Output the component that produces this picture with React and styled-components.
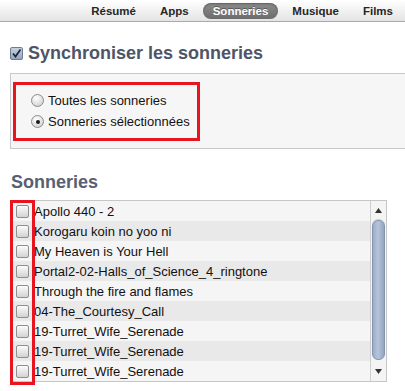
import React from 'react'
import styled, { createGlobalStyle } from 'styled-components'

const GlobalStyle = createGlobalStyle`
  html, body {
    margin: 0;
    padding: 0;
    background: #ffffff;
    font-family: "Liberation Sans", Arial, sans-serif;
  }
`

const tabs = ['Résumé', 'Apps', 'Sonneries', 'Musique', 'Films']

const ringtones = [
  'Apollo 440 - 2',
  'Korogaru koin no yoo ni',
  'My Heaven is Your Hell',
  'Portal2-02-Halls_of_Science_4_ringtone',
  'Through the fire and flames',
  '04-The_Courtesy_Call',
  '19-Turret_Wife_Serenade',
  '19-Turret_Wife_Serenade',
  '19-Turret_Wife_Serenade',
]

const Page = styled.div`
  width: 405px;
  height: 391px;
  overflow: hidden;
`

const TabBar = styled.div`
  height: 21px;
  display: flex;
  align-items: center;
  justify-content: flex-end;
  gap: 4px;
  padding-right: 2px;
  background: linear-gradient(#ffffff, #e4e4e4);
  border-bottom: 1px solid #a9a9a9;
`

const Tab = styled.div`
  height: 16px;
  line-height: 16px;
  padding: 0 10px;
  border-radius: 8px;
  font-size: 11.5px;
  font-weight: bold;
  color: ${p => (p.$active ? '#ffffff' : '#262626')};
  background: ${p => (p.$active ? 'linear-gradient(#8c8c8c, #6c6c6c)' : 'transparent')};
  box-shadow: ${p => (p.$active ? 'inset 0 1px 2px rgba(0,0,0,0.35)' : 'none')};
  text-shadow: ${p => (p.$active ? '0 -1px 0 rgba(0,0,0,0.35)' : 'none')};
`

const Content = styled.div`
  padding-left: 10px;
`

const SyncTitle = styled.h1`
  margin: 20px 0 0;
  display: flex;
  align-items: center;
  gap: 5px;
  font-size: 18px;
  line-height: 22px;
  font-weight: bold;
  color: #4e5566;
`

const OptionsBox = styled.div`
  margin-top: 9px;
  height: 76px;
  padding: 8px 0 0 2px;
  box-sizing: border-box;
  background: #f6f6f6;
  border: 1px solid #c9c9c9;
  border-right: none;
`

const Highlight = styled.div`
  width: fit-content;
  padding: 5px 7px 6px 15px;
  border: 3px solid #e8141f;
`

const RadioRow = styled.label`
  height: 21px;
  display: flex;
  align-items: center;
  gap: 4px;
  font-size: 13px;
  color: #111;
`

const Radio = styled.span`
  width: 11px;
  height: 11px;
  border-radius: 50%;
  border: 1px solid #8c8c8c;
  background: radial-gradient(circle at 40% 30%, #ffffff, #d4d4d4 80%);
  display: flex;
  align-items: center;
  justify-content: center;
  &::after {
    content: '';
    width: 4px;
    height: 4px;
    border-radius: 50%;
    background: ${p => (p.$checked ? '#1a1a1a' : 'transparent')};
  }
`

const SectionTitle = styled.h2`
  margin: 22px 0 0 1px;
  font-size: 18px;
  line-height: 22px;
  font-weight: bold;
  color: #586071;
`

const ListFrame = styled.div`
  position: relative;
  margin-top: 7px;
  width: 377px;
  display: flex;
  border: 1px solid #c6c6c6;
  box-sizing: border-box;
`

const Rows = styled.div`
  flex: 1;
`

const Row = styled.div`
  height: 20px;
  display: flex;
  align-items: center;
  gap: 5px;
  padding-left: 5px;
  font-size: 13px;
  color: #111;
  background: ${p => (p.$odd ? '#e9e9e9' : '#f5f5f5')};
  white-space: nowrap;
`

const Box = styled.span`
  width: 11px;
  height: 11px;
  flex: none;
  border: 1px solid #8f8f8f;
  border-radius: 2px;
  background: linear-gradient(#fcfcfc, #d2d2d2);
`

const ScrollBar = styled.div`
  width: 15px;
  border-left: 1px solid #cfcfcf;
  background: #f4f4f4;
  display: flex;
  flex-direction: column;
  align-items: center;
`

const Arrow = styled.div`
  height: 19px;
  display: flex;
  align-items: center;
  justify-content: center;
`

const Thumb = styled.div`
  flex: 1;
  width: 11px;
  margin: 0 0 2px;
  border-radius: 6px;
  border: 1px solid #8494b0;
  background: linear-gradient(90deg, #9badc8, #b7c4da 45%, #92a4c1);
  box-shadow: 0 -1px 0 #d0d0d0;
`

const ColumnMark = styled.div`
  position: absolute;
  left: -1px;
  top: -1px;
  bottom: -4px;
  width: 19px;
  border: 3px solid #e8141f;
`

const TitleCheck = () => (
  <svg width="13" height="13" viewBox="0 0 13 13">
    <defs>
      <linearGradient id="tc" x1="0" y1="0" x2="0" y2="1">
        <stop offset="0" stopColor="#c8d3e3" />
        <stop offset="1" stopColor="#93a3bd" />
      </linearGradient>
    </defs>
    <rect x="0.5" y="0.5" width="12" height="12" rx="1.5" fill="url(#tc)" stroke="#6f7c92" />
    <path d="M3 6.5 L5.5 9.5 L10.5 2.5" fill="none" stroke="#1e2430" strokeWidth="1.7" />
  </svg>
)

const Triangle = ({ down }) => (
  <svg width="7" height="5" viewBox="0 0 7 5">
    <path d={down ? 'M0 0 H7 L3.5 5 Z' : 'M0 5 H7 L3.5 0 Z'} fill="#333" />
  </svg>
)

export default function App() {
  return (
    <Page>
      <GlobalStyle />
      <TabBar>
        {tabs.map(t => (
          <Tab key={t} $active={t === 'Sonneries'}>{t}</Tab>
        ))}
      </TabBar>
      <Content>
        <SyncTitle>
          <TitleCheck />
          Synchroniser les sonneries
        </SyncTitle>
        <OptionsBox>
          <Highlight>
            <RadioRow><Radio />Toutes les sonneries</RadioRow>
            <RadioRow><Radio $checked />Sonneries sélectionnées</RadioRow>
          </Highlight>
        </OptionsBox>
        <SectionTitle>Sonneries</SectionTitle>
        <ListFrame>
          <Rows>
            {ringtones.map((r, i) => (
              <Row key={i} $odd={i % 2 === 1}>
                <Box />
                {r}
              </Row>
            ))}
          </Rows>
          <ScrollBar>
            <Arrow><Triangle /></Arrow>
            <Thumb />
            <Arrow><Triangle down /></Arrow>
          </ScrollBar>
          <ColumnMark />
        </ListFrame>
      </Content>
    </Page>
  )
}
